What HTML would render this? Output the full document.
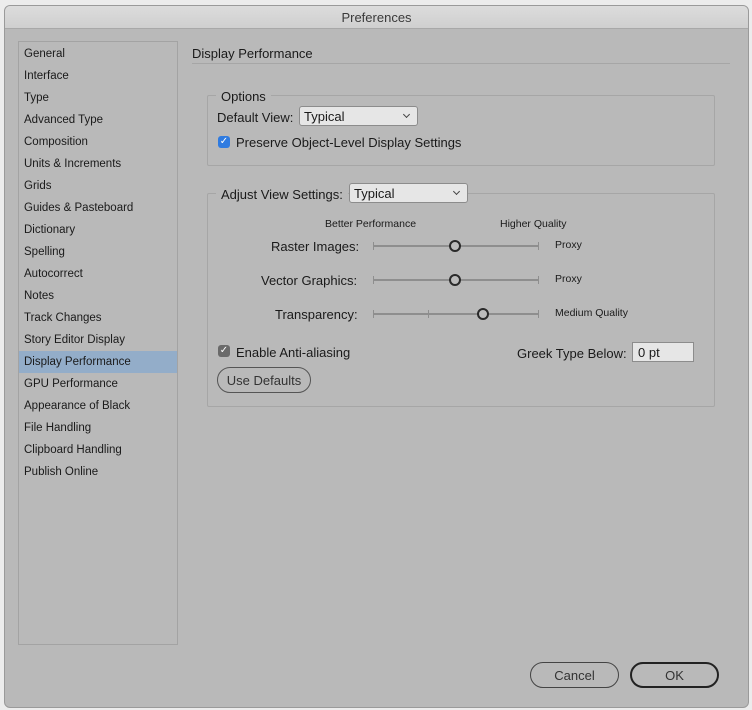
<!DOCTYPE html>
<html><head><meta charset="utf-8"><style>
*{margin:0;padding:0;box-sizing:border-box}
body{width:752px;height:710px;background:#ececec;font-family:"Liberation Sans",sans-serif;font-size:12px;color:#1a1a1a;position:relative;overflow:hidden}
.win{position:absolute;left:4px;top:5px;width:745px;height:703px;background:#b9b9b9;border:1px solid #9a9a9a;border-radius:6px;overflow:hidden}
.title{position:absolute;left:0;top:0;width:100%;height:23px;background:linear-gradient(#dcdcdc,#cfcfcf);border-bottom:1px solid #a8a8a8;text-align:center;line-height:23px;font-size:13px;color:#3a3a3a}
.a{position:absolute;white-space:nowrap}
.side{position:absolute;left:18px;top:41px;width:160px;height:604px;border:1px solid #a3a3a3;padding-top:1px}
.side div{height:22px;line-height:22px;padding-left:5px;font-size:11.5px}
.side .sel{background:#93adc9}
.grp{position:absolute;border:1px solid #a6a6a6;border-radius:2px}
.dd{position:absolute;background:#e6e6e6;border:1px solid #8c8c8c;border-radius:3px;height:20px;line-height:20px;padding-left:4px;font-size:13px}
.dd:after{content:"";position:absolute;right:8px;top:5px;width:4px;height:4px;border-right:1px solid #444;border-bottom:1px solid #444;transform:rotate(45deg)}
.cb{position:absolute;width:12px;height:12px;border-radius:3px;color:#fff;font-size:10px;line-height:12px;text-align:center}
.track{position:absolute;height:2px;background:#8e8e8e;width:166px;left:373px}
.tick{position:absolute;width:1px;height:8px;background:#8e8e8e}
.knob{position:absolute;width:12px;height:12px;border:2px solid #2a2a2a;border-radius:50%;background:#bcbcbc}
.btn{position:absolute;border:1px solid #3a3a3a;border-radius:13px;text-align:center;font-size:13px;color:#333}
</style></head><body>
<div class="win"><div class="title">Preferences</div></div>
<div class="side">
<div>General</div><div>Interface</div><div>Type</div><div>Advanced Type</div><div>Composition</div><div>Units &amp; Increments</div><div>Grids</div><div>Guides &amp; Pasteboard</div><div>Dictionary</div><div>Spelling</div><div>Autocorrect</div><div>Notes</div><div>Track Changes</div><div>Story Editor Display</div><div class="sel">Display Performance</div><div>GPU Performance</div><div>Appearance of Black</div><div>File Handling</div><div>Clipboard Handling</div><div>Publish Online</div>
</div>
<div class="a" style="left:192px;top:46px;font-size:13px">Display Performance</div>
<div class="a" style="left:192px;top:63px;width:538px;height:1px;background:#a6a6a6"></div>

<div class="grp" style="left:207px;top:95px;width:508px;height:71px"></div>
<div class="a" style="left:216px;top:89px;padding:0 5px;background:#b9b9b9;font-size:13px">Options</div>
<div class="a" style="left:217px;top:110px;font-size:13px">Default View:</div>
<div class="dd" style="left:299px;top:106px;width:119px">Typical</div>
<div class="cb" style="left:218px;top:136px;background:#2f7be0">✓</div>
<div class="a" style="left:236px;top:135px;font-size:13px">Preserve Object-Level Display Settings</div>

<div class="grp" style="left:207px;top:193px;width:508px;height:214px"></div>
<div class="a" style="left:216px;top:187px;padding:0 5px;background:#b9b9b9;font-size:13px">Adjust View Settings:</div>
<div class="dd" style="left:349px;top:183px;width:119px">Typical</div>
<div class="a" style="left:325px;top:218px;font-size:10.5px">Better Performance</div>
<div class="a" style="left:500px;top:218px;font-size:10.5px">Higher Quality</div>

<div class="a" style="left:271px;top:239px;font-size:13px">Raster Images:</div>
<div class="track" style="top:245px"></div><div class="tick" style="left:373px;top:242px"></div><div class="tick" style="left:538px;top:242px"></div>
<div class="knob" style="left:449px;top:240px"></div>
<div class="a" style="left:555px;top:239px;font-size:10.5px">Proxy</div>

<div class="a" style="left:261px;top:273px;font-size:13px">Vector Graphics:</div>
<div class="track" style="top:279px"></div><div class="tick" style="left:373px;top:276px"></div><div class="tick" style="left:538px;top:276px"></div>
<div class="knob" style="left:449px;top:274px"></div>
<div class="a" style="left:555px;top:273px;font-size:10.5px">Proxy</div>

<div class="a" style="left:275px;top:307px;font-size:13px">Transparency:</div>
<div class="track" style="top:313px"></div><div class="tick" style="left:373px;top:310px"></div><div class="tick" style="left:428px;top:310px"></div><div class="tick" style="left:538px;top:310px"></div>
<div class="knob" style="left:477px;top:308px"></div>
<div class="a" style="left:555px;top:307px;font-size:10.5px">Medium Quality</div>

<div class="cb" style="left:218px;top:345px;background:#6a6a6a">✓</div>
<div class="a" style="left:236px;top:345px;font-size:13px">Enable Anti-aliasing</div>
<div class="a" style="left:517px;top:346px;font-size:13px">Greek Type Below:</div>
<div class="a" style="left:632px;top:342px;width:62px;height:20px;background:#e6e6e6;border:1px solid #8c8c8c;padding-left:5px;line-height:19px;font-size:13px">0 pt</div>
<div class="btn" style="left:217px;top:367px;width:94px;height:26px;line-height:25px;border-color:#555">Use Defaults</div>

<div class="btn" style="left:530px;top:662px;width:89px;height:26px;line-height:25px;border-color:#444">Cancel</div>
<div class="btn" style="left:630px;top:662px;width:89px;height:26px;line-height:23px;border:2px solid #222">OK</div>
</body></html>
